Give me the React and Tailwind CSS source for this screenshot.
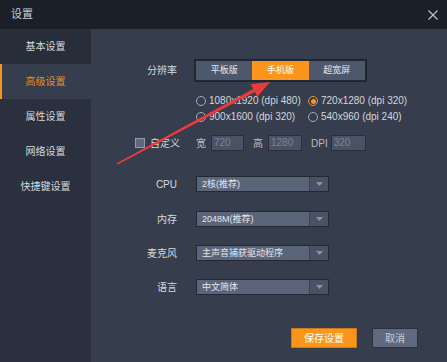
import React from "react";

const font = { fontFamily: '"Liberation Sans", "Noto Sans CJK SC", sans-serif' };

function Radio({ label, checked }) {
  return (
    <div className="flex items-center h-[16px]">
      {checked ? (
        <span className="w-[10px] h-[10px] rounded-full border border-[#f7931e] flex items-center justify-center">
          <span className="w-[5px] h-[5px] rounded-full bg-[#f7931e]" />
        </span>
      ) : (
        <span className="w-[10px] h-[10px] rounded-full border border-[#a9afbb]" />
      )}
      <span className="ml-[3px] text-[10px] text-[#d3d7de] leading-none">{label}</span>
    </div>
  );
}

function Select({ value }) {
  return (
    <div className="ml-[19px] w-[133px] h-[16px] flex border border-[#232833] bg-[#5b6579]">
      <div className="flex-1 flex items-center pl-[5px] text-[9px] text-[#e3e6eb] leading-none">{value}</div>
      <div className="w-[19px] h-full bg-[#4a5366] border-l border-[#3a4253] flex items-center justify-center">
        <svg width="7" height="4" viewBox="0 0 7 4">
          <path d="M0 0 L7 0 L3.5 4 Z" fill="#8b94a4" />
        </svg>
      </div>
    </div>
  );
}

function Input({ value, w }) {
  return (
    <div className={`${w} h-[16px] bg-[#4a5366] border border-[#2a303b] flex items-center pl-[2px] text-[10px] text-[#7b8496] leading-none`}>
      {value}
    </div>
  );
}

export default function App() {
  const items = ["基本设置", "高级设置", "属性设置", "网络设置", "快捷键设置"];
  return (
    <div className="relative w-[447px] h-[362px] overflow-hidden flex flex-col bg-[#363d4c]" style={font}>
      <div className="h-[29px] bg-[#1b1f28] flex items-center justify-between pl-[11px] pr-[9px] shrink-0">
        <span className="text-[11px] text-[#c9cdd4] leading-none">设置</span>
        <svg width="10" height="10" viewBox="0 0 10 10">
          <path d="M0.5 0.5 L9.5 9.5 M9.5 0.5 L0.5 9.5" stroke="#c4c8cf" strokeWidth="1.1" />
        </svg>
      </div>
      <div className="flex flex-1">
        <div className="w-[91px] bg-[#2a303d] flex flex-col">
          {items.map((t, i) => (
            <div
              key={t}
              className={
                i === 1
                  ? "h-[35px] flex items-center justify-center bg-[#363d4c] border-l-2 border-[#f7931e] text-[#e8901e] text-[10px]"
                  : i === 0
                  ? "h-[35px] flex items-center justify-center bg-[#272d39] text-[#d6d9df] text-[10px]"
                  : "h-[35px] flex items-center justify-center text-[#d6d9df] text-[10px]"
              }
            >
              <span className={i === 1 ? "-ml-[2px]" : ""}>{t}</span>
            </div>
          ))}
        </div>
        <div className="flex-1 flex flex-col pt-[30px]">
          <div className="flex items-center h-[23px]">
            <div className="w-[86px] text-right text-[10px] text-[#d6d9df]">分辨率</div>
            <div className="ml-[17px] w-[173px] h-[23px] border border-[#1f242e] bg-[#232833] p-[1px] flex">
              <div className="flex-1 bg-[#4d586c] flex items-center justify-center text-[9px] text-[#e6e8ec]">平板版</div>
              <div className="flex-1 bg-[#fb951b] flex items-center justify-center text-[9px] text-white">手机版</div>
              <div className="flex-1 bg-[#4d586c] flex items-center justify-center text-[9px] text-[#e6e8ec]">超宽屏</div>
            </div>
          </div>
          <div className="pl-[105px] mt-[11px] grid grid-cols-[112px_112px]">
            <Radio label="1080x1920 (dpi 480)" />
            <Radio label="720x1280 (dpi 320)" checked />
            <Radio label="900x1600 (dpi 320)" />
            <Radio label="540x960 (dpi 240)" />
          </div>
          <div className="mt-[10px] h-[16px] flex items-center pl-[44px]">
            <span className="w-[10px] h-[10px] bg-[#5c6780] border border-[#939cae]" />
            <span className="ml-[5px] w-[46px] text-[10px] text-[#d6d9df]">自定义</span>
            <span className="w-[10px] text-[10px] text-[#b9bec8]">宽</span>
            <div className="ml-[5px]"><Input value="720" w="w-[33px]" /></div>
            <span className="ml-[9px] w-[10px] text-[10px] text-[#b9bec8]">高</span>
            <div className="ml-[5px]"><Input value="1280" w="w-[34px]" /></div>
            <span className="ml-[9px] text-[10px] text-[#b9bec8]">DPI</span>
            <div className="ml-[3px]"><Input value="320" w="w-[35px]" /></div>
          </div>
          <div className="mt-[25px] flex items-center">
            <div className="w-[86px] text-right text-[10px] text-[#d6d9df]">CPU</div>
            <Select value="2核(推荐)" />
          </div>
          <div className="mt-[19px] flex items-center">
            <div className="w-[86px] text-right text-[10px] text-[#d6d9df]">内存</div>
            <Select value="2048M(推荐)" />
          </div>
          <div className="mt-[18px] flex items-center">
            <div className="w-[86px] text-right text-[10px] text-[#d6d9df]">麦克风</div>
            <Select value="主声音捕获驱动程序" />
          </div>
          <div className="mt-[18px] flex items-center">
            <div className="w-[86px] text-right text-[10px] text-[#d6d9df]">语言</div>
            <Select value="中文简体" />
          </div>
          <div className="mt-[33px] flex justify-end pr-[29px] gap-[15px]">
            <div className="w-[66px] h-[20px] bg-[#fb951b] border border-[#c9781a] flex items-center justify-center text-[10px] text-white">保存设置</div>
            <div className="w-[46px] h-[20px] bg-[#5f6a7e] border border-[#2c323d] flex items-center justify-center text-[10px] text-[#c8ccd4]">取消</div>
          </div>
        </div>
      </div>
      <svg className="absolute top-0 left-0 pointer-events-none" width="447" height="362" viewBox="0 0 447 362">
        <polygon
          points="116.65,163.34 253.3,89.0 250.8,84.3 270,82 257.4,96.7 254.9,92.0 117.35,164.66"
          fill="#ec3a3a"
        />
      </svg>
    </div>
  );
}
